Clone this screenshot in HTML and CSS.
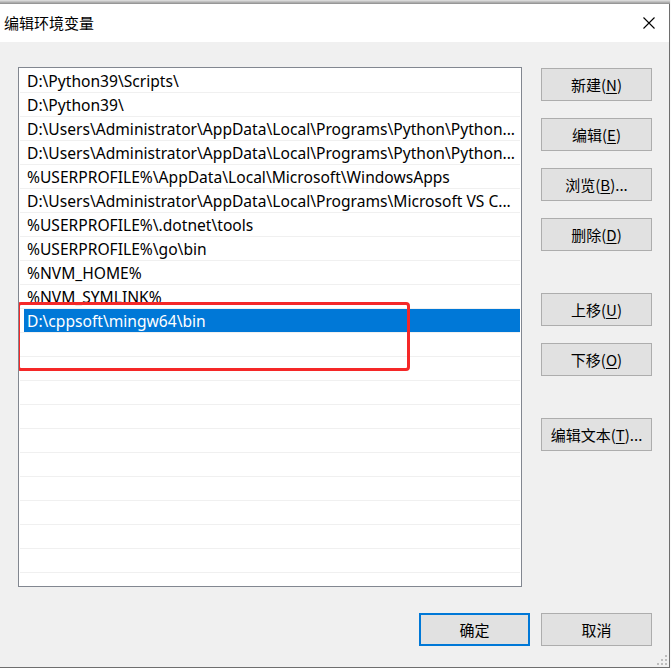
FILE: index.html
```html
<!DOCTYPE html>
<html lang="zh-CN">
<head>
<meta charset="utf-8">
<title>编辑环境变量</title>
<link rel="stylesheet" href="styles.css">
</head>
<body>
<div class="topshade"></div>
<div class="window">
  <div class="titlebar">
    <span class="title">编辑环境变量</span>
    <svg class="close" width="12" height="12" viewBox="0 0 12 12"><path d="M0.5 0.5 L11.5 11.5 M11.5 0.5 L0.5 11.5" stroke="#000" stroke-width="1.1" fill="none"/></svg>
  </div>
  <div class="content">
    <div class="main">
      <div class="listbox">
        <div class="row"><span class="cell">D:\Python39\Scripts\</span></div>
        <div class="row"><span class="cell">D:\Python39\</span></div>
        <div class="row"><span class="cell">D:\Users\Administrator\AppData\Local\Programs\Python\Python...</span></div>
        <div class="row"><span class="cell">D:\Users\Administrator\AppData\Local\Programs\Python\Python...</span></div>
        <div class="row"><span class="cell">%USERPROFILE%\AppData\Local\Microsoft\WindowsApps</span></div>
        <div class="row"><span class="cell">D:\Users\Administrator\AppData\Local\Programs\Microsoft VS C...</span></div>
        <div class="row"><span class="cell">%USERPROFILE%\.dotnet\tools</span></div>
        <div class="row"><span class="cell">%USERPROFILE%\go\bin</span></div>
        <div class="row"><span class="cell">%NVM_HOME%</span></div>
        <div class="row"><span class="cell">%NVM_SYMLINK%</span></div>
        <div class="row"><span class="cell selected">D:\cppsoft\mingw64\bin</span></div>
        <div class="row"><span class="cell"></span></div>
        <div class="row"><span class="cell"></span></div>
        <div class="row"><span class="cell"></span></div>
        <div class="row"><span class="cell"></span></div>
        <div class="row"><span class="cell"></span></div>
        <div class="row"><span class="cell"></span></div>
        <div class="row"><span class="cell"></span></div>
        <div class="row"><span class="cell"></span></div>
        <div class="row"><span class="cell"></span></div>
        <div class="row"><span class="cell"></span></div>
        <div class="row"><span class="cell"></span></div>
        <div class="mark"></div>
      </div>
      <div class="side">
        <div class="group">
          <button class="btn">新建(<u>N</u>)</button>
          <button class="btn">编辑(<u>E</u>)</button>
          <button class="btn">浏览(<u>B</u>)...</button>
          <button class="btn">删除(<u>D</u>)</button>
        </div>
        <div class="group">
          <button class="btn">上移(<u>U</u>)</button>
          <button class="btn">下移(<u>O</u>)</button>
        </div>
        <div class="group">
          <button class="btn">编辑文本(<u>T</u>)...</button>
        </div>
      </div>
    </div>
    <div class="footer">
      <button class="btn default">确定</button>
      <button class="btn">取消</button>
    </div>
    <svg class="grip" width="12" height="12" viewBox="0 0 12 12">
      <rect x="9" y="1" width="2" height="2" fill="#bdbdbd"/>
      <rect x="5" y="5" width="2" height="2" fill="#bdbdbd"/>
      <rect x="9" y="5" width="2" height="2" fill="#bdbdbd"/>
      <rect x="1" y="9" width="2" height="2" fill="#bdbdbd"/>
      <rect x="5" y="9" width="2" height="2" fill="#bdbdbd"/>
      <rect x="9" y="9" width="2" height="2" fill="#bdbdbd"/>
    </svg>
  </div>
</div>
</body>
</html>
```

FILE: styles.css
```css
* { box-sizing: border-box; }
html, body {
  margin: 0;
  padding: 0;
  background: #fafafa;
  font-family: "Noto Sans", "Noto Sans CJK SC", sans-serif;
  font-size: 15px;
  color: #000;
}
.topshade {
  height: 4px;
  width: 670px;
  background: linear-gradient(#e4e4e4, #8c8c8c);
}
.window {
  width: 670px;
  height: 664px;
  border-right: 1px solid #6e6e6e;
  border-bottom: 1px solid #6e6e6e;
  background: #f0f0f0;
  display: flex;
  flex-direction: column;
}
.titlebar {
  height: 38px;
  background: #fff;
  display: flex;
  align-items: center;
  justify-content: space-between;
  padding: 0 14px 0 4px;
}
.title {
  font-family: "Noto Sans CJK SC", sans-serif;
  font-size: 15px;
  line-height: 20px;
}
.close { display: block; }
.content {
  flex: 1;
  position: relative;
  padding: 25px 17px 0 18px;
}
.main {
  display: flex;
  gap: 19px;
}
.listbox {
  position: relative;
  width: 504px;
  height: 520px;
  border: 1px solid #828790;
  background: #fff;
  padding: 1px;
  overflow: hidden;
}
.row {
  height: 24px;
  border-bottom: 1px solid #f0f0f0;
  padding-left: 4px;
  display: flex;
}
.cell {
  flex: 1;
  display: block;
  height: 23px;
  line-height: 25px;
  padding-left: 3px;
  white-space: nowrap;
  overflow: hidden;
  font-size: 15.6px;
}
.cell.selected {
  background: #0078d7;
  color: #fff;
}
.mark {
  position: absolute;
  left: -2px;
  top: 234px;
  width: 393px;
  height: 69px;
  border: 3px solid #f52828;
  border-radius: 4px;
}
.side {
  display: flex;
  flex-direction: column;
  gap: 42px;
  padding-top: 1px;
}
.group {
  display: flex;
  flex-direction: column;
  gap: 17px;
}
.btn {
  width: 111px;
  height: 33px;
  margin: 0;
  padding: 0;
  background: #e1e1e1;
  border: 1px solid #adadad;
  border-radius: 0;
  font-family: "Noto Sans CJK SC", sans-serif;
  font-size: 15px;
  color: #000;
  line-height: 20px;
}
.btn u { text-underline-offset: 2px; }
.btn.default {
  border: 2px solid #0078d7;
}
.footer {
  display: flex;
  justify-content: flex-end;
  gap: 11px;
  margin-top: 26px;
}
.grip {
  position: absolute;
  right: 1px;
  bottom: 1px;
}
```
